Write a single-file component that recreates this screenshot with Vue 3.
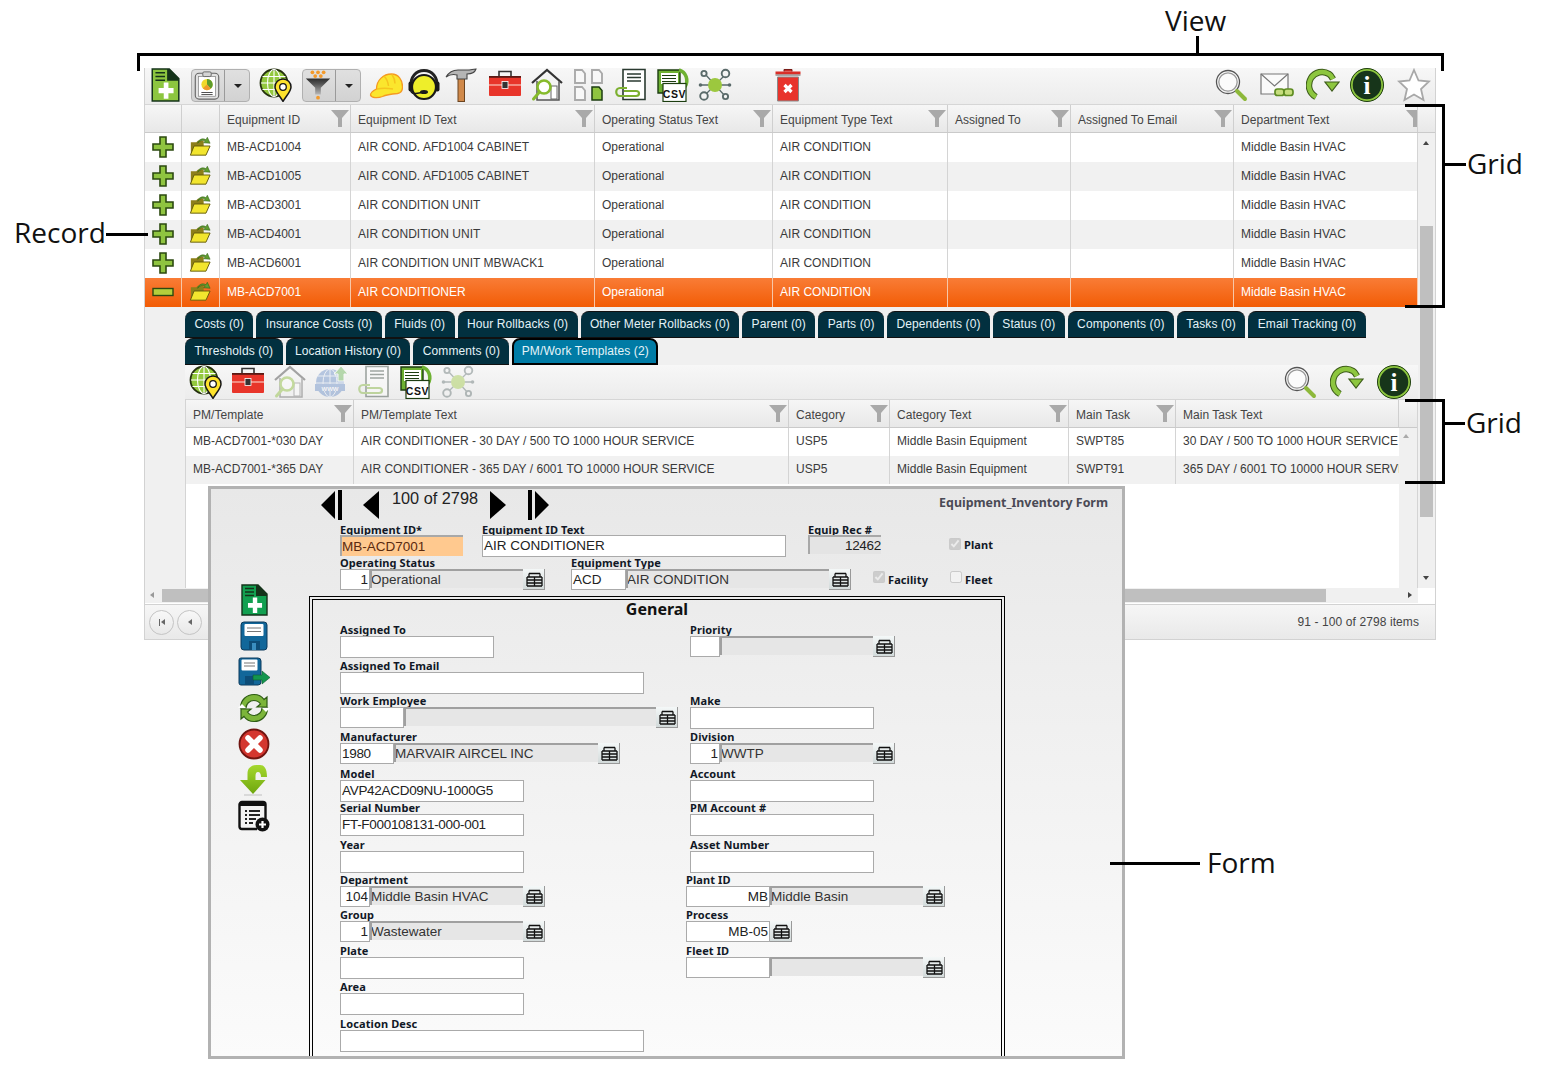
<script setup>
const mainCols = ['Equipment ID', 'Equipment ID Text', 'Operating Status Text', 'Equipment Type Text', 'Assigned To', 'Assigned To Email', 'Department Text']
const mainRows = [
  ['MB-ACD1004', 'AIR COND. AFD1004 CABINET'],
  ['MB-ACD1005', 'AIR COND. AFD1005 CABINET'],
  ['MB-ACD3001', 'AIR CONDITION UNIT'],
  ['MB-ACD4001', 'AIR CONDITION UNIT'],
  ['MB-ACD6001', 'AIR CONDITION UNIT MBWACK1'],
  ['MB-ACD7001', 'AIR CONDITIONER']
].map(([id, text]) => [id, text, 'Operational', 'AIR CONDITION', '', '', 'Middle Basin HVAC'])
const tabRows = [
  ['Costs (0)', 'Insurance Costs (0)', 'Fluids (0)', 'Hour Rollbacks (0)', 'Other Meter Rollbacks (0)', 'Parent (0)', 'Parts (0)', 'Dependents (0)', 'Status (0)', 'Components (0)', 'Tasks (0)', 'Email Tracking (0)'],
  ['Thresholds (0)', 'Location History (0)', 'Comments (0)', 'PM/Work Templates (2)']
]
const subCols = ['PM/Template', 'PM/Template Text', 'Category', 'Category Text', 'Main Task', 'Main Task Text']
const subRows = [
  ['MB-ACD7001-*030 DAY', 'AIR CONDITIONER - 30 DAY / 500 TO 1000 HOUR SERVICE', 'USP5', 'Middle Basin Equipment', 'SWPT85', '30 DAY / 500 TO 1000 HOUR SERVICE'],
  ['MB-ACD7001-*365 DAY', 'AIR CONDITIONER - 365 DAY / 6001 TO 10000 HOUR SERVICE', 'USP5', 'Middle Basin Equipment', 'SWPT91', '365 DAY / 6001 TO 10000 HOUR SERVICE']
]
const mainTools = ['helmet', 'headset', 'hammer', 'toolbox', 'house', 'docs', 'clipdoc', 'csv', 'network', 'trash']
const subTools = [
  { id: 'globe' }, { id: 'toolbox' }, { id: 'house', off: true }, { id: 'www', off: true },
  { id: 'clipdoc', off: true }, { id: 'csv' }, { id: 'network', off: true }
]
const formIcons = ['adddoc', 'save', 'saveas', 'sync', 'cancel', 'down', 'listadd']
const rowA = [
  { label: 'Equipment ID*', value: 'MB-ACD7001', w: 123, tone: 'req' },
  { label: 'Equipment ID Text', value: 'AIR CONDITIONER', w: 304, ml: 19 },
  { label: 'Equip Rec #', value: '12462', w: 73, tone: 'ro', right: true, tight: true, ml: 22 }
]
const rowB = [
  { label: 'Operating Status', value: '1', w: 30, right: true, desc: 'Operational', dw: 153, btn: true },
  { label: 'Equipment Type', value: 'ACD', w: 55, desc: 'AIR CONDITION', dw: 203, btn: true, ml: 26 }
]
const general = [
  { label: 'Assigned To', w: 154 },
  { label: 'Assigned To Email', w: 304 },
  { label: 'Work Employee', w: 64, desc: '', dw: 252, btn: true },
  { label: 'Manufacturer', value: '1980', w: 54, tight: true, desc: 'MARVAIR AIRCEL INC', dw: 204, btn: true },
  { label: 'Model', value: 'AVP42ACD09NU-1000G5', w: 184, tight: true },
  { label: 'Serial Number', value: 'FT-F000108131-000-001', w: 184, tight: true },
  { label: 'Year', w: 184 },
  { label: 'Department', value: '104', w: 30, right: true, desc: 'Middle Basin HVAC', dw: 153, btn: true },
  { label: 'Group', value: '1', w: 30, right: true, desc: 'Wastewater', dw: 153, btn: true },
  { label: 'Plate', w: 184 },
  { label: 'Area', w: 184 },
  { label: 'Location Desc', w: 304 },
  { label: 'Priority', w: 30, desc: '', dw: 153, btn: true, ml: 4 },
  { blank: true },
  { label: 'Make', w: 184, ml: 4 },
  { label: 'Division', value: '1', w: 30, right: true, desc: 'WWTP', dw: 153, btn: true, ml: 4 },
  { label: 'Account', w: 184, ml: 4 },
  { label: 'PM Account #', w: 184, ml: 4 },
  { label: 'Asset Number', w: 184, ml: 4 },
  { label: 'Plant ID', value: 'MB', w: 84, right: true, desc: 'Middle Basin', dw: 153, btn: true },
  { label: 'Process', value: 'MB-05', w: 84, right: true, btn: true },
  { label: 'Fleet ID', w: 84, desc: '', dw: 153, btn: true }
]
</script>

<template>
  <div class="page">
    <svg class="defs" width="0" height="0" aria-hidden="true">
      <defs>
        <linearGradient id="limeDown" x1="0" y1="0" x2="0" y2="1">
          <stop offset="0" stop-color="#a5d82e" />
          <stop offset="1" stop-color="#6ea60e" />
        </linearGradient>
        <linearGradient id="funnelBody" x1="0" y1="0" x2="0" y2="1">
          <stop offset="0" stop-color="#2c2c2c" />
          <stop offset=".35" stop-color="#555" />
          <stop offset="1" stop-color="#b5b5b5" />
        </linearGradient>
        <symbol id="adddoc" viewBox="0 0 32 32">
          <path d="M4 1h16l9 9v21H4z" fill="currentColor" stroke="#15331a" stroke-width="1.400" />
          <path d="M18 1h2l9 9v2H18z" fill="#15331a" />
          <path d="M7 4.500h9M7 8h9M7 11.500h9" stroke="#15331a" stroke-width="1.300" />
          <path d="M14 15h5v5.500h5.500v5H19V31h-5v-5.500H8.500v-5H14z" fill="#fff" transform="translate(2.500 -.8) scale(.88 .96)" />
        </symbol>
        <symbol id="plus" viewBox="0 0 24 24">
          <path d="M9 2h6v7h7v6h-7v7H9v-7H2V9h7z" fill="#8fc440" stroke="#2c4a10" stroke-width="1.600" />
        </symbol>
        <symbol id="minus" viewBox="0 0 24 24">
          <rect x="2" y="8.500" width="20" height="7" fill="#b4cf3c" stroke="#2c4a10" stroke-width="1.400" />
        </symbol>
        <symbol id="folder" viewBox="0 0 24 24">
          <path d="M2 8h6l2-2h6v15H2z" fill="#8d7f1a" />
          <path d="M5.500 12H23l-4.500 10H1.500z" fill="#f2e52e" stroke="#5f560a" stroke-width="1" />
          <path d="M9.500 9c1-4.500 5.500-6 9-3.800L20 2.500l3 6.500-7-.5 1.600-2C15 5 12 6 9.500 9z" fill="#5f9e2f" stroke="#2f5d14" stroke-width=".6" />
        </symbol>
        <symbol id="filter" viewBox="0 0 18 18">
          <path d="M0 0h18l-7 8v9H7V8z" fill="#a9a9a9" />
        </symbol>
        <symbol id="lookup" viewBox="0 0 20 20">
          <path d="M5 4.500h11M3 8h15M3 11h15M3 14h15M3 17h15M3 8v9M10.500 8v9M18 8v9M5 4.500V8M16 4.500V8" stroke="#111" stroke-width="1.300" fill="none" />
        </symbol>
        <symbol id="clipboard" viewBox="0 0 32 32">
          <rect x="3.500" y="3.500" width="25" height="27.500" rx="4" fill="#e2e2e2" stroke="#666" stroke-width="1.200" />
          <rect x="7" y="7" width="18" height="21" fill="#fff" stroke="#888" stroke-width=".8" />
          <rect x="11.500" y="2" width="9" height="5" rx="1.500" fill="#d4d4d4" stroke="#666" />
          <circle cx="16" cy="15.500" r="6" fill="#f0d92b" />
          <path d="M16 15.500V9.500a6 6 0 0 1 4 10.500z" fill="#5e9c2c" />
          <path d="M16 15.500l4 4.500a6 6 0 0 1-8.500-.5z" fill="#ee9a2c" />
          <path d="M10 24h12M10 26.200h12" stroke="#444" stroke-width="1" />
        </symbol>
        <symbol id="globe" viewBox="0 0 34 34">
          <circle cx="15" cy="15" r="13.500" fill="#93c83e" stroke="#25300f" stroke-width="1.800" />
          <path d="M2 15h26M3.500 8.500h23M3.500 21.500h23M15 1.500v27" stroke="#fff" stroke-width="1.100" fill="none" />
          <ellipse cx="15" cy="15" rx="6.500" ry="13.500" stroke="#fff" stroke-width="1.100" fill="none" />
          <path d="M24 11a8 8 0 0 1 8 8c0 4.500-5 9-8 14.500-3-5.500-8-10-8-14.500a8 8 0 0 1 8-8z" fill="#fde22c" stroke="#171717" stroke-width="1.500" />
          <circle cx="24" cy="19" r="3.300" fill="#fff" stroke="#171717" stroke-width="1.300" />
        </symbol>
        <symbol id="funnel" viewBox="0 0 32 32">
          <path d="M3 9h26L19 19v7h-6v-7z" fill="url(#funnelBody)" />
          <g fill="#f39a2b">
            <circle cx="10" cy="2.500" r="2" /><circle cx="16" cy="2.500" r="2" /><circle cx="22" cy="2.500" r="2" />
            <circle cx="13" cy="6.500" r="2" /><circle cx="19" cy="6.500" r="2" /><circle cx="16" cy="29.500" r="2" />
          </g>
        </symbol>
        <symbol id="helmet" viewBox="0 0 34 34">
          <path d="M1.500 27c0-3 3-4.500 6-6 0-9 7-15 15-15 7 0 11 6 11 13 0 4-2 6-5 6.500-6 .5-11 1-15 3-5 2-11 1.500-12-1.500z" fill="#fbe62d" stroke="#f59a22" stroke-width="1.300" />
          <path d="M15 8c3 3 4 6 4.500 10M23 6.500c2 3 3 6 3 9M8 21c5-1 10-1 16 0" stroke="#f5c41d" stroke-width="1.500" fill="none" />
        </symbol>
        <symbol id="headset" viewBox="0 0 34 34">
          <path d="M4 19C3 9 9 2.500 17 2.500S31 9 30 19" fill="none" stroke="#222" stroke-width="2.800" />
          <circle cx="17" cy="19" r="12" fill="#eeee2a" stroke="#1a1a1a" stroke-width="2.200" />
          <path d="M3 19c0 5 2 7 6 6.500l6-1" fill="none" stroke="#1a1a1a" stroke-width="1.600" />
          <rect x="1.500" y="13.500" width="4.500" height="10" rx="2" fill="#1a1a1a" />
          <rect x="28" y="13.500" width="4.500" height="10" rx="2" fill="#1a1a1a" />
          <ellipse cx="17" cy="24" rx="4" ry="2" fill="#1a1a1a" />
        </symbol>
        <symbol id="hammer" viewBox="0 0 34 34">
          <rect x="14" y="10" width="6.500" height="23.500" fill="#d0894a" stroke="#6b4420" />
          <path d="M2 9c3-5 7-7 12-7h9c4 0 6-1 9-1-1 3-3 5-9 5v5H13V7C9 6 5 7 2 9z" fill="#b5b5b5" stroke="#444" stroke-width="1.100" />
        </symbol>
        <symbol id="toolbox" viewBox="0 0 34 34">
          <path d="M11 8V3.500h12V8" fill="none" stroke="#333" stroke-width="1.600" />
          <rect x="1" y="8" width="32" height="20" rx="1" fill="#e8352a" />
          <rect x="1" y="8" width="32" height="1.800" fill="#5a1a14" />
          <rect x="1" y="16" width="32" height="2" fill="#f28b80" />
          <rect x="14" y="13.500" width="6" height="7" fill="#333" stroke="#fff" stroke-width=".8" />
        </symbol>
        <symbol id="house" viewBox="0 0 34 34">
          <path d="M2 15L17 2l15 13" fill="none" stroke="#333" stroke-width="2.200" />
          <path d="M7 13v19h22V13" fill="#f4f4f4" stroke="#555" stroke-width="1.500" />
          <rect x="21" y="18" width="6" height="13" fill="#fff" stroke="#666" />
          <circle cx="14" cy="19" r="6.500" fill="#fff" stroke="#86bb2c" stroke-width="2.600" />
          <path d="M9.500 24l-6 7" stroke="#86bb2c" stroke-width="3" stroke-linecap="round" />
        </symbol>
        <symbol id="docs" viewBox="0 0 34 34">
          <g fill="#f8f8f8" stroke="#aaa" stroke-width="1.900">
            <path d="M3 2h7l3 3.500V15H3zM20 2h7l3 3.500V15H20zM3 19h7l3 3.500V32H3z" />
          </g>
          <path d="M20 19h7l3 3.500V32H20z" fill="#8fc440" stroke="#1c3d10" stroke-width="1.500" />
        </symbol>
        <symbol id="clipdoc" viewBox="0 0 34 34">
          <path d="M9 1.500h22v30H9z" fill="#fff" stroke="#2a3a30" stroke-width="1.600" />
          <path d="M13 6h14M13 9.500h14M13 13h14" stroke="#2a3a30" stroke-width="1.300" />
          <path d="M13 20H6c-5 0-5 8 0 8h16c4 0 4-5 0-5H10" fill="none" stroke="#7cb030" stroke-width="2.200" />
        </symbol>
        <symbol id="csv" viewBox="0 0 34 34">
          <path d="M2 2h22v23H2z" fill="#6eb132" stroke="#1c3d10" stroke-width="1.400" />
          <path d="M5 5h17v11H5z" fill="#fff" />
          <path d="M6 7.500h14M6 10.500h14M6 13.500h14" stroke="#1c3d10" stroke-width="1.100" />
          <path d="M23 2c7 2 10 10 6 17" fill="none" stroke="#6eb132" stroke-width="3.500" />
          <rect x="7" y="15.500" width="23" height="18" fill="#fff" stroke="#1c3d10" stroke-width="1.200" />
          <text x="18.500" y="29.500" text-anchor="middle" class="csv-text">CSV</text>
        </symbol>
        <symbol id="network" viewBox="0 0 34 34">
          <path d="M17 17L7 6M17 17L27 7M17 17L7 27M17 17L27 28M17 17H3M17 17H31" stroke="#5a6a6a" stroke-width="1.300" />
          <circle cx="17" cy="17" r="7" fill="#9cc83e" />
          <g fill="#f4f4f4" stroke="#5a6a6a" stroke-width="1.900">
            <circle cx="6" cy="5.500" r="2.600" /><circle cx="27.500" cy="5.500" r="3.800" /><circle cx="6" cy="28" r="3.800" /><circle cx="27.500" cy="28.500" r="2.600" />
          </g>
          <circle cx="2.500" cy="17" r="1.800" fill="#5a6a6a" /><circle cx="31.500" cy="17" r="1.800" fill="#5a6a6a" />
        </symbol>
        <symbol id="trash" viewBox="0 0 34 34">
          <path d="M13 3.500V1.500h8v2" fill="#c9302a" stroke="#7a1d18" />
          <rect x="4.500" y="3.500" width="25" height="3" fill="#d93029" />
          <rect x="4.500" y="6.500" width="25" height="1.200" fill="#888" />
          <path d="M6.500 9h21v24h-21z" fill="#e8342c" stroke="#8a8a8a" />
          <path d="M13.500 17l7 7M20.500 17l-7 7" stroke="#fff" stroke-width="3.200" />
        </symbol>
        <symbol id="magnifier" viewBox="0 0 34 34">
          <circle cx="14" cy="14" r="11.500" fill="#fbfbfb" stroke="#555" stroke-width="1.300" />
          <circle cx="14" cy="14" r="9.200" fill="none" stroke="#999" stroke-width="1.300" />
          <path d="M23 23l8 8" stroke="#8db83a" stroke-width="4" stroke-linecap="round" />
        </symbol>
        <symbol id="mail" viewBox="0 0 34 34">
          <path d="M1 6h27v20H1z" fill="#fafafa" stroke="#777" stroke-width="1.200" />
          <path d="M1 6l13.500 12L28 6" fill="none" stroke="#777" stroke-width="1.200" />
          <g fill="#c6dd7e" stroke="#5e8c22" stroke-width="1.700">
            <rect x="15" y="21" width="9" height="6.500" rx="2.500" />
            <rect x="24" y="21" width="9" height="6.500" rx="2.500" />
          </g>
        </symbol>
        <symbol id="refresh" viewBox="0 0 34 34">
          <path d="M10 29C3 25 1 17 5 10 9 4 17 2 23 6c2 1 3 3 4 5" fill="none" stroke="#3d5c1a" stroke-width="6.500" />
          <path d="M10 29C3 25 1 17 5 10 9 4 17 2 23 6c2 1 3 3 4 5" fill="none" stroke="#8dc63f" stroke-width="4.500" />
          <path d="M19 14h14l-7 9z" fill="#8dc63f" stroke="#3d5c1a" stroke-width="1.200" />
        </symbol>
        <symbol id="info" viewBox="0 0 34 34">
          <circle cx="17" cy="17" r="15.500" fill="#17351a" stroke="#8dc63f" stroke-width="2.400" />
          <circle cx="17" cy="17" r="16.500" fill="none" stroke="#1f3d12" stroke-width="1" />
          <text x="17" y="26" text-anchor="middle" class="info-text">i</text>
        </symbol>
        <symbol id="star" viewBox="0 0 34 34">
          <path d="M17 2l4.500 10.500L32 13.500l-8 7.500 2.500 11L17 26.500 7.500 32 10 21l-8-7.500 10.500-1z" fill="#fff" stroke="#a8a8a8" stroke-width="1.800" />
        </symbol>
        <symbol id="www" viewBox="0 0 34 34">
          <circle cx="15" cy="18" r="14" fill="#5f86c4" />
          <path d="M1 18h28M3 11h24M3 25h24M15 4v28" stroke="#dfe8f5" stroke-width="1" />
          <ellipse cx="15" cy="18" rx="7" ry="14" fill="none" stroke="#dfe8f5" stroke-width="1" />
          <rect x="0" y="19" width="30" height="7" fill="#5f86c4" />
          <text x="15" y="25.500" text-anchor="middle" class="www-text">WWW</text>
          <path d="M26 1l7 8h-4v7h-6V9h-4z" fill="#5fb04a" stroke="#fff" />
        </symbol>
        <symbol id="save" viewBox="0 0 32 32">
          <path d="M6 2h20a3 3 0 0 1 3 3v22a3 3 0 0 1-3 3H6a3 3 0 0 1-3-3V5a3 3 0 0 1 3-3z" fill="#12679a" stroke="#0d3b5c" stroke-width="1" />
          <rect x="6.500" y="4" width="19" height="12" rx="1" fill="#fff" />
          <path d="M9 8h14M9 11.500h14" stroke="#777" stroke-width="1.200" />
          <rect x="11" y="21" width="11" height="9" fill="#0d4d78" />
          <rect x="14" y="23" width="4" height="7" fill="#3a8ec0" />
        </symbol>
        <symbol id="saveas" viewBox="0 0 32 32">
          <path d="M3 2h17a3 3 0 0 1 3 3v21a3 3 0 0 1-3 3H3a2 2 0 0 1-2-2V4a2 2 0 0 1 2-2z" fill="#12679a" stroke="#0d3b5c" />
          <rect x="3.500" y="3.500" width="16" height="11" rx="1" fill="#fff" />
          <path d="M6 7h11M6 10h11" stroke="#777" stroke-width="1.200" />
          <rect x="7" y="20" width="9" height="9" fill="#0d4d78" />
          <path d="M15 19h9v-4l8 6.500-8 6.500v-4h-9z" fill="#13964e" stroke="#0d5a30" stroke-width=".6" />
        </symbol>
        <symbol id="sync" viewBox="0 0 32 32">
          <path d="M2.500 16C2.500 8 8.500 2.500 16 2.500c4.500 0 8 2 10 5l3-2.500v10H19l3.500-3c-1.500-2-4-3.500-6.500-3.500-4.500 0-8 3.500-8 7.500z" fill="#7cb53a" stroke="#2e5c14" stroke-width="1.200" />
          <path d="M29.500 16c0 8-6 13.500-13.500 13.500-4.500 0-8-2-10-5L3 27V17h10l-3.500 3c1.500 2 4 3.500 6.500 3.500 4.500 0 8-3.500 8-7.500z" fill="#7cb53a" stroke="#2e5c14" stroke-width="1.200" />
          <path d="M0 16l4-4 4 4zM32 16l-4 4-4-4z" fill="#fff" />
        </symbol>
        <symbol id="cancel" viewBox="0 0 32 32">
          <circle cx="16" cy="16" r="14.500" fill="#d4362f" stroke="#701410" stroke-width="1.800" />
          <path d="M10 10l12 12M22 10L10 22" stroke="#fff" stroke-width="5.500" stroke-linecap="round" />
        </symbol>
        <symbol id="down" viewBox="0 0 32 32">
          <path d="M9.500 16V10C9.500 4 13 1 20 1h2c4 0 7 3 7 12h-6c0-3-1-5-3-5-2 0-2.500 2-2.500 4v4h10L15 30 2 16z" fill="url(#limeDown)" />
          <path d="M6 31h18" stroke="#c8c8c8" stroke-width="1.200" />
        </symbol>
        <symbol id="listadd" viewBox="0 0 32 32">
          <path d="M19 29H4a2.500 2.500 0 0 1-2.500-2.500v-22A2.500 2.500 0 0 1 4 2h21a2.500 2.500 0 0 1 2.500 2.500V19" fill="none" stroke="#111" stroke-width="2.400" />
          <rect x="2" y="2" width="25" height="4" fill="#111" />
          <path d="M7 11h2M11 11h11M7 15h2M11 15h11M7 19h2M11 19h7M7 23h2M11 23h4" stroke="#222" stroke-width="1.800" />
          <circle cx="24.500" cy="24.500" r="7" fill="#111" />
          <path d="M24.500 21v7M21 24.500h7" stroke="#fff" stroke-width="2.200" />
        </symbol>
        <symbol id="navfirst" viewBox="0 0 24 30">
          <path d="M15 1v28L1 15zM18 0h4v30h-4z" fill="#000" />
        </symbol>
        <symbol id="navprev" viewBox="0 0 18 30">
          <path d="M17 1v28L1 15z" fill="#000" />
        </symbol>
        <symbol id="navnext" viewBox="0 0 18 30">
          <path d="M1 1v28l16-14z" fill="#000" />
        </symbol>
        <symbol id="navlast" viewBox="0 0 24 30">
          <path d="M9 1v28l14-14zM2 0h4v30H2z" fill="#000" />
        </symbol>
      </defs>
    </svg>

    <section class="window">
      <div class="toolbar">
        <svg class="tool tool-add"><use href="#adddoc" /></svg>
        <div class="split split-a">
          <svg class="tool"><use href="#clipboard" /></svg>
          <span class="caret"></span>
        </div>
        <svg class="tool tool-globe"><use href="#globe" /></svg>
        <div class="split split-b">
          <svg class="tool"><use href="#funnel" /></svg>
          <span class="caret"></span>
        </div>
        <svg v-for="t in mainTools" :key="t" class="tool" :class="'tool-' + t"><use :href="'#' + t" /></svg>
        <div class="tool-end">
          <svg class="tool"><use href="#magnifier" /></svg>
          <svg class="tool"><use href="#mail" /></svg>
          <svg class="tool"><use href="#refresh" /></svg>
          <svg class="tool tool-info"><use href="#info" /></svg>
          <svg class="tool tool-star"><use href="#star" /></svg>
        </div>
      </div>

      <div class="body">
        <div class="content">
          <div class="main-row main-head">
            <div class="hcell"></div>
            <div class="hcell"></div>
            <div v-for="c in mainCols" :key="c" class="hcell">
              <span>{{ c }}</span>
              <svg class="filter"><use href="#filter" /></svg>
            </div>
          </div>
          <div
            v-for="(r, i) in mainRows"
            :key="r[0]"
            class="main-row row"
            :class="{ alt: i % 2 === 1, selected: i === 5 }"
          >
            <div class="cell icon-cell"><svg class="row-icon"><use :href="i === 5 ? '#minus' : '#plus'" /></svg></div>
            <div class="cell icon-cell"><svg class="row-icon"><use href="#folder" /></svg></div>
            <div v-for="(v, j) in r" :key="j" class="cell">{{ v }}</div>
          </div>

          <div class="detail-wrap">
            <div class="detail">
              <div v-for="(tr, k) in tabRows" :key="k" class="tabs">
                <span v-for="t in tr" :key="t" class="tab" :class="{ active: t.startsWith('PM/Work') }">{{ t }}</span>
              </div>
              <div class="subtoolbar">
                <svg v-for="t in subTools" :key="t.id" class="tool" :class="{ off: t.off }"><use :href="'#' + t.id" /></svg>
                <div class="tool-end sub-end">
                  <svg class="tool"><use href="#magnifier" /></svg>
                  <svg class="tool"><use href="#refresh" /></svg>
                  <svg class="tool"><use href="#info" /></svg>
                </div>
              </div>
              <div class="sub-grid">
                <div class="sub-table">
                  <div class="sub-row sub-head">
                    <div v-for="(c, n) in subCols" :key="c" class="hcell">
                      <span>{{ c }}</span>
                      <svg v-if="n < 5" class="filter"><use href="#filter" /></svg>
                    </div>
                  </div>
                  <div v-for="(r, i) in subRows" :key="r[0]" class="sub-row row sub-data" :class="{ alt: i === 1 }">
                    <div v-for="(v, j) in r" :key="j" class="cell">{{ v }}</div>
                  </div>
                </div>
                <div class="sub-scroll">
                  <div class="sub-scroll-head"></div>
                  <span class="arrow-up light"></span>
                </div>
              </div>
            </div>
          </div>
        </div>
        <div class="vscroll">
          <div class="vscroll-head"></div>
          <span class="arrow-up"></span>
          <div class="vthumb"></div>
          <span class="arrow-down"></span>
        </div>
      </div>

      <div class="hscroll">
        <div class="htrack">
          <span class="arrow-left"></span>
          <div class="hthumb"></div>
          <span class="arrow-right"></span>
        </div>
      </div>

      <footer class="pager">
        <span class="pager-btn"><i class="pg-bar"></i><i class="pg-tri"></i></span>
        <span class="pager-btn"><i class="pg-tri"></i></span>
        <span class="pager-info">91 - 100 of 2798 items</span>
      </footer>
    </section>

    <section class="form">
      <div class="form-top">
        <div class="nav">
          <svg class="nav-first"><use href="#navfirst" /></svg>
          <svg class="nav-prev"><use href="#navprev" /></svg>
          <span class="nav-count">100 of 2798</span>
          <svg class="nav-next"><use href="#navnext" /></svg>
          <svg class="nav-last"><use href="#navlast" /></svg>
          <span class="form-name">Equipment_Inventory Form</span>
        </div>
        <div class="top-row row-a">
          <div v-for="f in rowA" :key="f.label" class="field" :style="{ marginLeft: (f.ml || 0) + 'px' }">
            <div class="flabel">{{ f.label }}</div>
            <div class="fctl">
              <span class="input" :class="[f.tone, { right: f.right, tight: f.tight }]" :style="{ width: f.w + 'px' }">{{ f.value }}</span>
            </div>
          </div>
          <label class="check check-plant"><input type="checkbox" checked disabled />Plant</label>
        </div>
        <div class="top-row row-b">
          <div v-for="f in rowB" :key="f.label" class="field" :style="{ marginLeft: (f.ml || 0) + 'px' }">
            <div class="flabel">{{ f.label }}</div>
            <div class="fctl short">
              <span class="input" :class="{ right: f.right }" :style="{ width: f.w + 'px' }">{{ f.value }}</span>
              <span class="desc" :style="{ width: f.dw + 'px' }">{{ f.desc }}</span>
              <span class="lookup"><svg><use href="#lookup" /></svg></span>
            </div>
          </div>
          <label class="check check-facility"><input type="checkbox" checked disabled />Facility</label>
          <label class="check check-fleet"><input type="checkbox" disabled />Fleet</label>
        </div>
      </div>
      <div class="form-body">
        <div class="rail">
          <svg v-for="ic in formIcons" :key="ic" class="rail-icon" :class="'rail-' + ic"><use :href="'#' + ic" /></svg>
        </div>
        <div class="general">
          <div class="general-title">General</div>
          <div class="general-grid">
            <div v-for="(f, i) in general" :key="i" class="field" :style="{ marginLeft: (f.ml || 0) + 'px' }">
              <template v-if="!f.blank">
                <div class="flabel">{{ f.label }}</div>
                <div class="fctl" :class="{ short: f.btn }">
                  <span class="input" :class="{ right: f.right, tight: f.tight }" :style="{ width: f.w + 'px' }">{{ f.value }}</span>
                  <span v-if="f.desc !== undefined" class="desc" :style="{ width: f.dw + 'px' }">{{ f.desc }}</span>
                  <span v-if="f.btn" class="lookup"><svg><use href="#lookup" /></svg></span>
                </div>
              </template>
            </div>
          </div>
        </div>
      </div>
    </section>

    <div class="note note-view">View</div>
    <div class="bracket bracket-view"></div>
    <div class="stem stem-view"></div>
    <div class="note note-grid1">Grid</div>
    <div class="bracket bracket-grid1"></div>
    <div class="stem stem-grid1"></div>
    <div class="note note-grid2">Grid</div>
    <div class="bracket bracket-grid2"></div>
    <div class="stem stem-grid2"></div>
    <div class="note note-record">Record</div>
    <div class="stem stem-record"></div>
    <div class="note note-form">Form</div>
    <div class="stem stem-form"></div>
  </div>
</template>

<style scoped>
.page {
  position: relative;
  width: 1541px;
  height: 1070px;
  overflow: hidden;
  background: #fff;
  padding-top: 68px;
  box-sizing: border-box;
  font-family: "Liberation Sans", Arial, sans-serif;
  font-size: 12px;
  color: #3a3a3a;
}
.defs { position: absolute; }
.csv-text { font: 700 10.500px "Liberation Sans", sans-serif; letter-spacing: .6px; fill: #111; }
.info-text { font: 700 25px "Liberation Serif", serif; fill: #fff; }
.www-text { font: 700 6px "Liberation Sans", sans-serif; fill: #fff; }

/* window */
.window {
  margin-left: 144px;
  width: 1292px;
  height: 572px;
  box-sizing: border-box;
  border-left: 1px solid #d2d2d2;
  border-right: 1px solid #d2d2d2;
  border-bottom: 1px solid #d2d2d2;
  display: flex;
  flex-direction: column;
  background: #f0f0f0;
}
.toolbar {
  height: 36px;
  flex: none;
  display: flex;
  align-items: center;
  gap: 8px;
  padding: 0 4px 2px 3px;
  box-sizing: border-box;
  background: linear-gradient(#f7f7f7, #ececec);
}
.tool { width: 34px; height: 34px; flex: none; display: block; }
.tool-add { color: #8cc63f; }
.tool-globe { position: relative; left: 1px; }
.split {
  display: flex;
  align-items: center;
  width: 59px;
  height: 33px;
  box-sizing: border-box;
  border: 1px solid #b0b0b0;
  border-radius: 4px;
  background: linear-gradient(#e0e0e0, #d2d2d2);
  flex: none;
}
.split .tool { width: 30px; height: 30px; margin-right: 2px; }
.split-a { margin-left: 1px; }
.split-b { margin-left: 2px; }
.caret {
  flex: 1;
  height: 100%;
  border-left: 1px solid #9a9a9a;
  position: relative;
}
.caret::after {
  content: "";
  position: absolute;
  left: 9px;
  top: 14px;
  border-left: 4px solid transparent;
  border-right: 4px solid transparent;
  border-top: 4px solid #222;
}
.tool-headset { margin-left: -4px; }
.tool-hammer { margin-left: -5px; }
.tool-toolbox { margin-left: 2px; }
.tool-trash { margin-left: 31px; }
.tool-end { margin-left: auto; display: flex; align-items: center; gap: 12px; }
.tool-info { margin-left: -2px; }
.tool-star { margin-left: 1px; }

.body { flex: none; height: 484px; display: flex; }
.content { width: 1273px; flex: none; display: flex; flex-direction: column; }
.main-row {
  display: grid;
  grid-template-columns: 37px 38px 131px 244px 178px 175px 123px 163px 184px;
}
.hcell {
  position: relative;
  overflow: hidden;
  box-sizing: border-box;
  padding: 0 0 0 7px;
  line-height: 30px;
  letter-spacing: .04px;
  white-space: nowrap;
  color: #444;
  border-right: 1px solid #cfcfcf;
}
.main-head, .sub-head {
  height: 29px;
  box-sizing: border-box;
  border-top: 1px solid #d6d6d6;
  border-bottom: 1px solid #cacaca;
  background: linear-gradient(#f6f6f6, #e8e8e8);
}
.filter { position: absolute; right: 1px; top: 5px; width: 18px; height: 18px; }
.main-head .hcell:last-child .filter { right: -7px; }
.row { height: 29px; background: #fff; }
.row.alt { background: #f1f1f1; }
.cell {
  box-sizing: border-box;
  padding-left: 7px;
  line-height: 29px;
  letter-spacing: .02px;
  white-space: nowrap;
  overflow: hidden;
  border-right: 1px solid #d4d4d4;
}
.icon-cell { display: flex; align-items: center; justify-content: center; padding: 0; }
.row-icon { width: 24px; height: 24px; display: block; margin-top: -2px; }
.icon-cell + .icon-cell .row-icon { width: 22px; height: 22px; margin: -4px 0 0 -2px; }
.row.selected {
  background: linear-gradient(#f97c36, #f25c05);
  color: #fff;
}
.row.selected .cell { border-right-color: #f7c7a8; }

.detail-wrap { flex: 1; padding-left: 40px; display: flex; min-height: 0; background: #f0f0f0; }
.detail { flex: 1; display: flex; flex-direction: column; min-width: 0; padding-top: 4px; }
.tabs { display: flex; gap: 3px; height: 27px; flex: none; }
.tab {
  box-sizing: border-box;
  padding: 0 9.400px;
  line-height: 25px;
  height: 27px;
  letter-spacing: .1px;
  color: #e4f3f8;
  background: #02303f;
  border: 1px solid #111;
  border-left-width: 0;
  border-right-width: 0;
  border-radius: 8px 8px 0 0;
  white-space: nowrap;
}
.tab.active {
  background: #007ba5;
  border: 2px solid #000;
  padding: 0 7.400px;
  line-height: 23px;
}
.subtoolbar {
  height: 34px;
  flex: none;
  display: flex;
  align-items: center;
  gap: 8px;
  padding: 0 7px 0 4px;
  background: linear-gradient(#f7f7f7, #ececec);
}
.off { opacity: .42; }
.sub-end { gap: 13px; }
.sub-grid { flex: 1; display: flex; min-height: 0; background: #fff; }
.sub-table { width: 1214px; flex: none; box-sizing: border-box; border-left: 1px solid #d4d4d4; }
.sub-row { display: grid; grid-template-columns: 168px 435px 101px 179px 107px 223px; }
.row.sub-data { height: 28px; }
.sub-data .cell { line-height: 27px; }
.sub-data .cell:last-child { border-right: 0; }
.sub-scroll {
  flex: 1;
  position: relative;
  background: #f0f0f0;
  border-right: 1px solid #d4d4d4;
}
.sub-scroll-head { height: 29px; background: linear-gradient(#f6f6f6, #e8e8e8); border-top: 1px solid #d6d6d6; border-bottom: 1px solid #cacaca; box-sizing: border-box; }
.sub-scroll .arrow-up { top: 35px; left: 4px; }
.vscroll { flex: 1; position: relative; background: #f0f0f0; }
.vscroll-head { height: 29px; box-sizing: border-box; border-top: 1px solid #d6d6d6; border-bottom: 1px solid #cacaca; background: linear-gradient(#f6f6f6, #e8e8e8); }
.vthumb { position: absolute; left: 2px; width: 13px; top: 122px; height: 291px; background: #bfbfbf; }
.arrow-up, .arrow-down, .arrow-left, .arrow-right { position: absolute; width: 0; height: 0; }
.arrow-up { left: 5px; top: 37px; border-left: 3.500px solid transparent; border-right: 3.500px solid transparent; border-bottom: 4px solid #444; }
.arrow-up.light { border-bottom-color: #aaa; }
.arrow-down { left: 5px; bottom: 8px; border-left: 3.500px solid transparent; border-right: 3.500px solid transparent; border-top: 4px solid #444; }
.hscroll { height: 16px; flex: none; background: #fff; }
.htrack { position: relative; width: 1273px; height: 15px; background: #f0f0f0; }
.hthumb { position: absolute; left: 17px; top: 1px; width: 1164px; height: 13px; background: #bfbfbf; }
.arrow-left { left: 5px; top: 4px; border-top: 3.500px solid transparent; border-bottom: 3.500px solid transparent; border-right: 4px solid #999; }
.arrow-right { right: 6px; top: 4px; border-top: 3.500px solid transparent; border-bottom: 3.500px solid transparent; border-left: 4px solid #444; }
.pager {
  flex: 1;
  display: flex;
  align-items: center;
  gap: 3px;
  padding: 0 16px 0 4px;
  border-top: 1px solid #d2d2d2;
  background: linear-gradient(#f6f6f6, #e9e9e9);
}
.pager-btn {
  width: 25px;
  height: 25px;
  box-sizing: border-box;
  border: 1px solid #c4c4c4;
  border-radius: 50%;
  display: flex;
  align-items: center;
  justify-content: center;
  background: linear-gradient(#f8f8f8, #e8e8e8);
}
.pg-bar { width: 1px; height: 7px; background: #666; margin-right: 1px; }
.pg-tri { width: 0; height: 0; border-top: 3.500px solid transparent; border-bottom: 3.500px solid transparent; border-right: 4px solid #666; }
.pager-info { margin-left: auto; color: #444; letter-spacing: .09px; }

/* form */
.form {
  position: absolute;
  left: 208px;
  top: 486px;
  width: 917px;
  height: 573px;
  box-sizing: border-box;
  border: 3px solid #b2b2b2;
  overflow: hidden;
  background: linear-gradient(#e8e8e8, #fbfbfb);
  font-family: "Liberation Sans", Arial, sans-serif;
  color: #2a2a3a;
}
.form-top { height: 107px; box-sizing: border-box; padding-left: 109px; }
.nav { height: 35px; display: flex; align-items: flex-start; padding-top: 1px; box-sizing: border-box; }
.nav svg { display: block; height: 30px; flex: none; }
.nav-first { width: 24px; }
.nav-prev { width: 18px; margin-left: 18px; }
.nav-count { font-size: 16.300px; line-height: 14px; padding-top: 1px; margin-left: 12px; color: #222; width: 97px; }
.nav-next { width: 18px; }
.nav-last { width: 24px; margin-left: 19px; }
.form-name {
  margin-left: auto;
  margin-right: 14px;
  padding-top: 4px;
  font: 700 12.400px "Noto Sans", sans-serif;
  color: #4a4a55;
}
.top-row { display: flex; padding-left: 20px; height: 33px; }
.row-b { height: 34px; }
.top-row .field { flex: none; }
.flabel {
  height: 12px;
  font: 700 11px/12px "Noto Sans", sans-serif;
  letter-spacing: .1px;
  color: #111826;
  white-space: nowrap;
}
.row-a .flabel { height: 11px; line-height: 11px; }
.fctl { display: flex; align-items: flex-start; height: 22px; }
.input {
  box-sizing: border-box;
  height: 22px;
  display: block;
  flex: none;
  background: #fff;
  border: 1px solid #aaa;
  padding: 0 1px;
  font-size: 13.500px;
  line-height: 20px;
  color: #222;
  white-space: nowrap;
  overflow: hidden;
}
.input.tight { letter-spacing: -.3px; }
.fctl.short .input { height: 21px; line-height: 19px; }
.input.right { text-align: right; }
.input.req {
  background: #ffc98f;
  border: 0;
  border-top: 2px solid #a8a8a8;
  border-left: 2px solid #a8a8a8;
  height: 21px;
  line-height: 19px;
  padding: 0;
  color: #5a2a10;
}
.input.ro {
  background: #e4e4e4;
  border: 0;
  border-top: 2px solid #a8a8a8;
  border-left: 2px solid #a8a8a8;
  height: 19px;
  line-height: 17px;
  padding-right: 0;
}
.desc {
  box-sizing: border-box;
  height: 19px;
  flex: none;
  display: block;
  background: #e6e6e6;
  border-top: 2px solid #a0a0a0;
  border-left: 2px solid #a0a0a0;
  font-size: 13.500px;
  line-height: 17px;
  text-indent: -1px;
  color: #333;
  white-space: nowrap;
  overflow: hidden;
}
.lookup {
  width: 21px;
  height: 20px;
  flex: none;
  display: flex;
  justify-content: center;
  background: linear-gradient(#f4f8f8, #d2dada);
  border-right: 1px solid #999;
  border-bottom: 1px solid #999;
  box-sizing: content-box;
}
.lookup svg { width: 20px; height: 20px; display: block; }
.check {
  display: flex;
  align-items: flex-start;
  font: 700 11px/14px "Noto Sans", sans-serif;
  letter-spacing: .1px;
  color: #111826;
}
.check input { margin: 0 3px 0 0; width: 12px; height: 12px; position: relative; }
.check-plant { margin-left: 68px; padding-top: 14px; }
.check-facility { margin-left: 22px; padding-top: 14px; line-height: 18px; }
.check-fleet { margin-left: 22px; padding-top: 14px; line-height: 18px; }
.form-body { display: flex; }
.rail {
  width: 98px;
  flex: none;
  margin-top: -12px;
  box-sizing: border-box;
  padding-left: 27px;
  display: flex;
  flex-direction: column;
  gap: 4px;
}
.rail-icon { width: 32px; height: 32px; display: block; flex: none; }
.rail-adddoc { color: #12a050; }
.general {
  width: 696px;
  height: 480px;
  box-sizing: border-box;
  border: 4px double #000;
  flex: none;
}
.general-title {
  height: 24px;
  text-align: center;
  font: 700 16px/18px "Noto Sans", sans-serif;
  color: #111;
}
.general-grid {
  display: grid;
  grid-auto-flow: column;
  grid-template-columns: 346px 300px;
  grid-template-rows: 36px 35px 36px 37px 34px 37px 35px 35px 36px 36px 37px 36px;
  padding-left: 27px;
}

/* annotations */
.note {
  position: absolute;
  font: 400 28px/36px "Open Sans", sans-serif;
  color: #111;
  white-space: nowrap;
}
.bracket { position: absolute; box-sizing: border-box; border: 3px solid #000; }
.stem { position: absolute; background: #000; }
.note-view { left: 1165px; top: 2px; }
.bracket-view { left: 137px; top: 53px; width: 1307px; height: 18px; border-bottom: 0; }
.stem-view { left: 1196px; top: 36px; width: 3px; height: 18px; }
.note-grid1 { left: 1467px; top: 145px; }
.bracket-grid1 { left: 1405px; top: 104px; width: 40px; height: 204px; border-left: 0; }
.stem-grid1 { left: 1445px; top: 163px; width: 21px; height: 3px; }
.note-grid2 { left: 1466px; top: 404px; }
.bracket-grid2 { left: 1405px; top: 399px; width: 40px; height: 85px; border-left: 0; }
.stem-grid2 { left: 1445px; top: 422px; width: 20px; height: 3px; }
.note-record { left: 14px; top: 214px; }
.stem-record { left: 106px; top: 233px; width: 42px; height: 3px; }
.note-form { left: 1207px; top: 844px; }
.stem-form { left: 1110px; top: 862px; width: 90px; height: 3px; }
</style>
